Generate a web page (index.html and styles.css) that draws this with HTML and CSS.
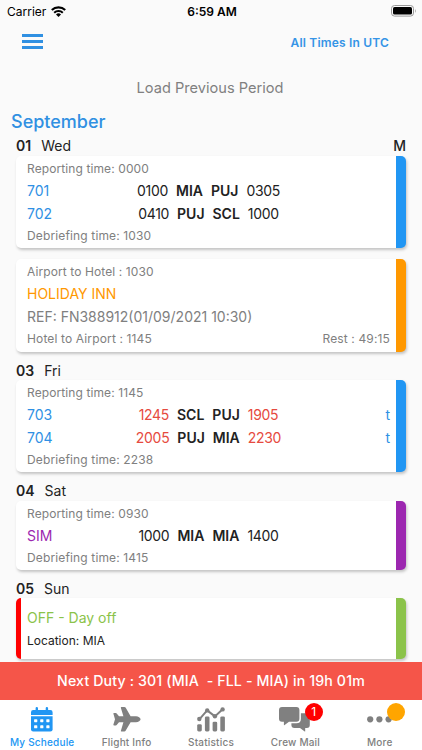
FILE: index.html
```html
<!DOCTYPE html>
<html lang="en">
<head>
  <meta charset="UTF-8">
  <meta name="viewport" content="width=device-width, initial-scale=1">
  <title>My Schedule</title>
  <link rel="stylesheet" href="styles.css">
</head>
<body>

  <!-- Status bar -->
  <div class="status">
    <div class="carrier">
      <span>Carrier</span>
      <svg width="15" height="11" viewBox="0 0 15 11">
        <path d="M0.8 4.1A9.5 9.5 0 0 1 14.2 4.1" fill="none" stroke="#000" stroke-width="2.1"/>
        <path d="M3.2 6.7A6.1 6.1 0 0 1 11.8 6.7" fill="none" stroke="#000" stroke-width="2"/>
        <path d="M5 8.4A3.6 3.6 0 0 1 10 8.4L7.5 10.9Z"/>
      </svg>
    </div>
    <div class="clock">6:59 AM</div>
    <svg class="battery" width="26" height="12" viewBox="0 0 26 12">
      <rect x="0.5" y="0.5" width="22" height="10.6" rx="3" fill="none" stroke="#999"/>
      <rect x="2" y="2" width="19" height="7.6" rx="1.6"/>
      <path d="M24 4V8Q25.4 6 24 4Z" fill="#888"/>
    </svg>
  </div>

  <!-- Header -->
  <header class="header">
    <div class="menu"><i></i><i></i><i></i></div>
    <div class="utc">All Times In UTC</div>
  </header>

  <main class="schedule">
    <div class="load">Load Previous Period</div>
    <h2 class="month">September</h2>

    <div class="day"><b>01</b><span>Wed</span><em>M</em></div>
    <div class="card blue">
      <div class="note"><span>Reporting time: 0000</span></div>
      <div class="flight">
        <span class="num">701</span>
        <div class="leg"><span>0100</span><b>MIA</b><b>PUJ</b><span>0305</span></div>
        <span class="tag"></span>
      </div>
      <div class="flight">
        <span class="num">702</span>
        <div class="leg"><span>0410</span><b>PUJ</b><b>SCL</b><span>1000</span></div>
        <span class="tag"></span>
      </div>
      <div class="note debrief"><span>Debriefing time: 1030</span></div>
    </div>

    <div class="card orange hotel">
      <div class="note"><span>Airport to Hotel : 1030</span></div>
      <div class="line name">HOLIDAY INN</div>
      <div class="line ref">REF: FN388912(01/09/2021 10:30)</div>
      <div class="note debrief"><span>Hotel to Airport : 1145</span><span>Rest : 49:15</span></div>
    </div>

    <div class="day"><b>03</b><span>Fri</span></div>
    <div class="card blue">
      <div class="note"><span>Reporting time: 1145</span></div>
      <div class="flight late">
        <span class="num">703</span>
        <div class="leg"><span>1245</span><b>SCL</b><b>PUJ</b><span>1905</span></div>
        <span class="tag">t</span>
      </div>
      <div class="flight late">
        <span class="num">704</span>
        <div class="leg"><span>2005</span><b>PUJ</b><b>MIA</b><span>2230</span></div>
        <span class="tag">t</span>
      </div>
      <div class="note debrief"><span>Debriefing time: 2238</span></div>
    </div>

    <div class="day"><b>04</b><span>Sat</span></div>
    <div class="card purple">
      <div class="note"><span>Reporting time: 0930</span></div>
      <div class="flight">
        <span class="num">SIM</span>
        <div class="leg"><span>1000</span><b>MIA</b><b>MIA</b><span>1400</span></div>
        <span class="tag"></span>
      </div>
      <div class="note debrief"><span>Debriefing time: 1415</span></div>
    </div>

    <div class="day"><b>05</b><span>Sun</span></div>
    <div class="card green off">
      <div class="line name">OFF - Day off</div>
      <div class="note place"><span>Location: MIA</span></div>
    </div>
  </main>

  <div class="next">Next Duty : 301 (MIA&nbsp; - FLL - MIA) in 19h 01m</div>

  <!-- Bottom tabs -->
  <nav class="tabs">
    <div class="tab active">
      <svg width="22" height="25" viewBox="0 0 22 25">
        <path d="M0 8V5.2Q0 3 2.2 3H4.6V1.2Q4.6 0 5.8 0Q7 0 7 1.2V3H14.7V1.2Q14.7 0 15.9 0Q17.1 0 17.1 1.2V3H19.4Q21.6 3 21.6 5.2V8Z"/>
        <path d="M0 9.2H21.6V22.3Q21.6 24.5 19.4 24.5H2.2Q0 24.5 0 22.3Z"/>
        <g fill="#fff">
          <rect x="3.1" y="12.2" width="3.2" height="3" rx=".6"/>
          <rect x="9.2" y="12.2" width="3.2" height="3" rx=".6"/>
          <rect x="15.3" y="12.2" width="3.2" height="3" rx=".6"/>
          <rect x="3.1" y="18.3" width="3.2" height="3" rx=".6"/>
          <rect x="9.2" y="18.3" width="3.2" height="3" rx=".6"/>
          <rect x="15.3" y="18.3" width="3.2" height="3" rx=".6"/>
        </g>
      </svg>
      <span>My Schedule</span>
    </div>
    <div class="tab">
      <svg width="28" height="25" viewBox="0 0 28 25">
        <path d="M23 9.2C25.3 9.2 27.6 10.8 27.6 12.2C27.6 13.7 25.3 15.2 23 15.2H17.6L12.6 23.8Q12.2 24.5 11.4 24.5H8.4Q7.6 24.5 7.9 23.7L10.4 15.2H6L3.7 18Q3.4 18.4 2.9 18.4H.9Q.2 18.4 .4 17.6L2 12.2L.4 6.8Q.2 6.1 .9 6.1H2.9Q3.4 6.1 3.7 6.4L6 9.2H10.4L7.9 .9Q7.6 0 8.4 0H11.4Q12.2 0 12.6 .6L17.6 9.2Z"/>
      </svg>
      <span>Flight Info</span>
    </div>
    <div class="tab">
      <svg width="28" height="25" viewBox="0 0 28 25">
        <rect x="0.2" y="17.2" width="4.6" height="7.3" rx="1.4"/>
        <rect x="7.9" y="9.4" width="4.6" height="15.1" rx="1.4"/>
        <rect x="15.6" y="14.7" width="4.6" height="9.8" rx="1.4"/>
        <rect x="23.3" y="9.4" width="4.6" height="15.1" rx="1.4"/>
        <path d="M2.3 12.3L10.2 3.4L17.9 9.4L25.6 2.3" fill="none" stroke="#808080" stroke-width="2"/>
        <circle cx="2.3" cy="12" r="2.2"/>
        <circle cx="10.2" cy="3.4" r="2.2"/>
        <circle cx="17.9" cy="9.2" r="2.2"/>
        <circle cx="25.6" cy="2.4" r="2.2"/>
      </svg>
      <span>Statistics</span>
    </div>
    <div class="tab">
      <svg width="32" height="25" viewBox="0 0 32 25">
        <path d="M3 0H17.4Q20.4 0 20.4 3V11.7Q20.4 14.7 17.4 14.7H10L5.3 18.3Q4.9 18.5 4.9 18V14.7H3Q0 14.7 0 11.7V3Q0 0 3 0Z"/>
        <path d="M21.9 6.2H27.8Q30.8 6.2 30.8 9.2V18Q30.8 21 27.8 21H26.2V24.2Q26.2 24.8 25.7 24.4L21 21H15.4Q12.4 21 12.4 18V16.2H17.4Q21.9 16.2 21.9 11.7Z"/>
      </svg>
      <i class="badge red">1</i>
      <span>Crew Mail</span>
    </div>
    <div class="tab">
      <svg width="25" height="25" viewBox="0 0 25 25">
        <circle cx="3.2" cy="12.3" r="3.1"/>
        <circle cx="12.4" cy="12.3" r="3.1"/>
        <circle cx="21.6" cy="12.3" r="3.1"/>
      </svg>
      <i class="badge amber"></i>
      <span>More</span>
    </div>
  </nav>

</body>
</html>
```

FILE: styles.css
```css
* {
  box-sizing: border-box;
}

body {
  margin: 0;
  height: 750px;
  display: flex;
  flex-direction: column;
  overflow: hidden;
  background-color: #fafafa;
  color: #222;
  font-family: Inter, "Liberation Sans", sans-serif;
}

svg {
  display: block;
}

/* status bar */
.status {
  display: grid;
  grid-template-columns: 1fr auto 1fr;
  align-items: center;
  height: 22px;
  padding: 0 5px 0 7px;
  color: #000;
  font-size: 12px;
}

.carrier {
  display: flex;
  align-items: center;
  gap: 5px;
}

.clock {
  font-weight: 600;
}

.battery {
  justify-self: end;
}

/* header */
.header {
  display: flex;
  justify-content: space-between;
  align-items: center;
  height: 40px;
  padding: 0 33px 0 22px;
}

.menu {
  display: flex;
  flex-direction: column;
  gap: 3px;
  margin-bottom: 2px;
}

.menu i {
  width: 21px;
  height: 3px;
  background-color: #3090e2;
}

.utc {
  color: #3594e6;
  font-size: 12px;
  font-weight: 600;
  letter-spacing: 0.18px;
}

/* schedule list */
.schedule {
  flex: 1;
  padding: 0 16px;
}

.load {
  height: 50px;
  line-height: 52px;
  text-align: center;
  color: #808080;
  font-size: 14.6px;
  margin-right: 2px;
}

.month {
  margin: 0 0 0 -5px;
  height: 19px;
  line-height: 19px;
  color: #3090e2;
  font-size: 18px;
  font-weight: 500;
}

.day {
  display: flex;
  gap: 10px;
  height: 28.5px;
  padding-top: 8px;
  line-height: 22px;
  font-size: 14px;
}

.day b,
.leg b {
  font-weight: 600;
}

.month + .day {
  height: 25px;
  padding-top: 4px;
}

.day em {
  margin-left: auto;
  font-style: normal;
  font-weight: 500;
}

.card {
  padding: 1px 6px 1px 11px;
  border-right: 10px solid;
  border-radius: 5px;
  background-color: #fff;
  box-shadow: 1px 2px 3px rgba(0, 0, 0, 0.22);
}

.card + .card {
  margin-top: 11px;
}

.hotel {
  height: 92.5px;
}

.blue {
  border-color: #2196f3;
}

.orange {
  border-color: #ff9800;
}

.purple {
  border-color: #9c27b0;
}

.green {
  border-color: #8bc34a;
}

.note {
  display: flex;
  justify-content: space-between;
  height: 22px;
  line-height: 23px;
  color: #808080;
  font-size: 12px;
  letter-spacing: 0.1px;
}

.debrief {
  line-height: 22px;
  letter-spacing: 0.14px;
}

.flight {
  display: grid;
  grid-template-columns: 1fr auto 1fr;
  height: 23px;
  line-height: 23px;
  font-size: 14px;
}

.num,
.tag {
  color: #2f90e4;
}

.purple .num {
  color: #9c27b0;
}

.tag {
  text-align: right;
}

.leg {
  display: flex;
  gap: 8px;
}

.leg span {
  letter-spacing: -0.3px;
}

.late .leg span {
  color: #e64a40;
}

.line {
  height: 23px;
  line-height: 23px;
  font-size: 14px;
}

.hotel .name {
  color: #ff9800;
}

.ref {
  color: #808080;
}

.off {
  height: 61px;
  padding-top: 8px;
  border-left: 5px solid #f00;
  padding-left: 6px;
}

.off .name {
  color: #8bc34a;
}

.off .place {
  color: #222;
  letter-spacing: 0;
}

/* next duty banner */
.next {
  height: 38px;
  line-height: 38px;
  background-color: #f55549;
  color: #fff;
  text-align: center;
  font-size: 14.2px;
  font-weight: 500;
  letter-spacing: 0.12px;
}

/* tabs */
.tabs {
  display: grid;
  grid-template-columns: repeat(5, 1fr);
  height: 50px;
  background-color: #fff;
}

.tab {
  position: relative;
  display: flex;
  flex-direction: column;
  align-items: center;
  padding-top: 7px;
  color: #808080;
  fill: #808080;
  font-size: 10px;
  font-weight: 500;
  letter-spacing: 0.2px;
}

.tab span {
  margin-top: 4px;
  line-height: 12px;
}

.active {
  color: #2196f3;
  fill: #2196f3;
}

.badge {
  position: absolute;
  top: 3px;
  left: 51.5px;
  width: 18px;
  height: 18px;
  border-radius: 50%;
  line-height: 18px;
  text-align: center;
  font-style: normal;
  font-size: 12px;
  font-weight: 400;
  color: #fff;
}

.red {
  background-color: #f00;
}

.amber {
  left: 49px;
  background-color: #ffa500;
}
```
